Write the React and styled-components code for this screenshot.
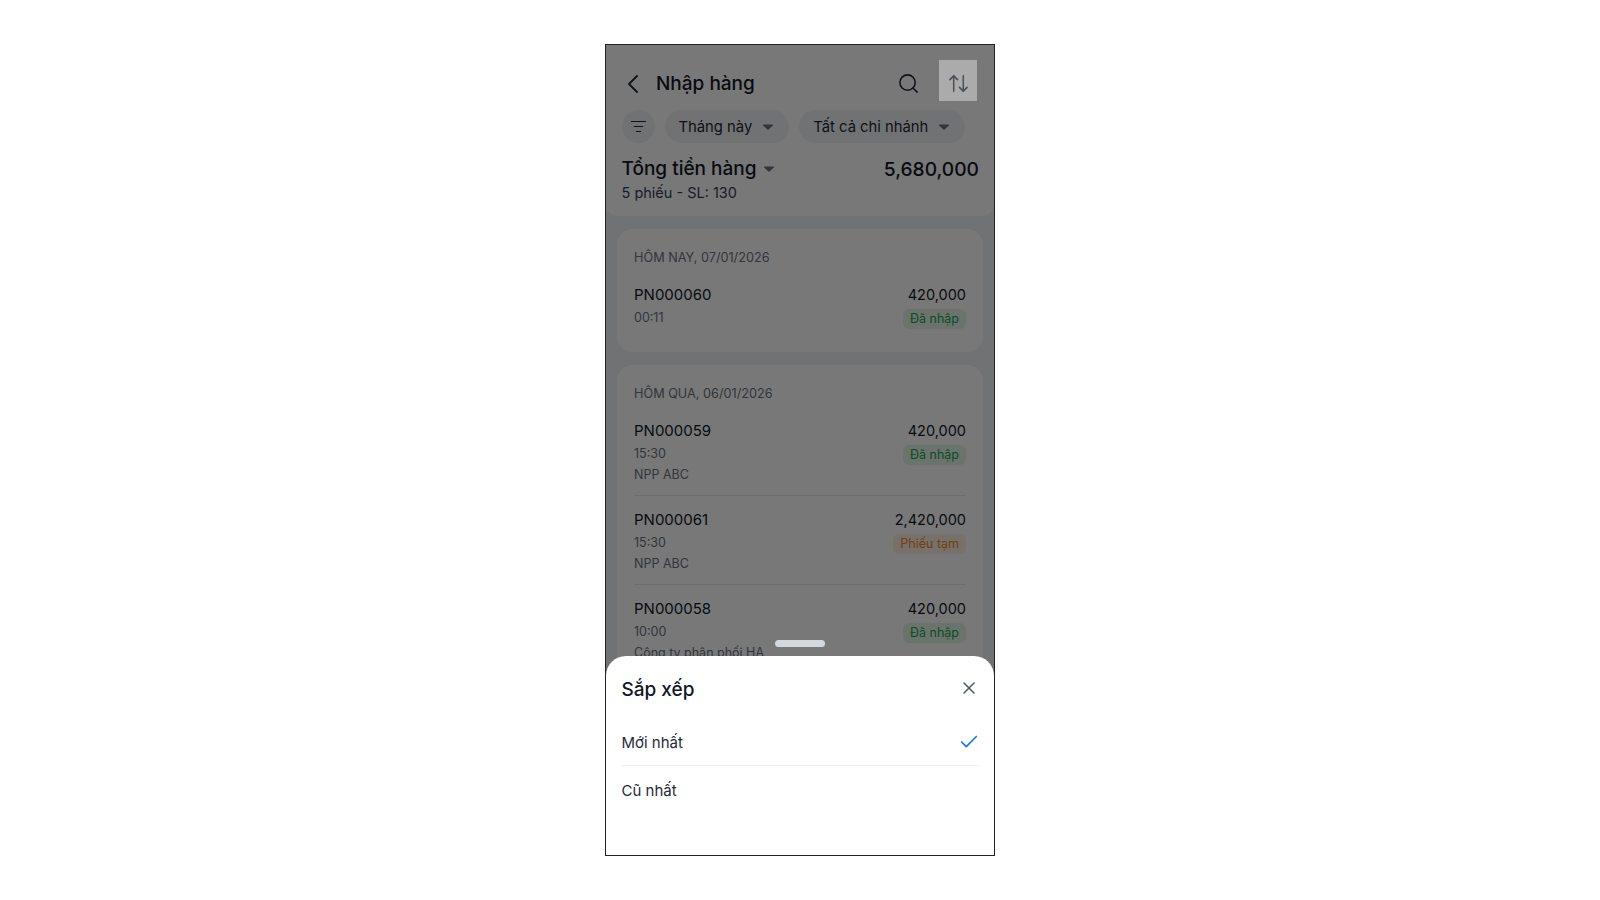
import React from "react";
import styled, { createGlobalStyle } from "styled-components";
import { ArrowUpDown, Check, ChevronLeft, ListFilter, Search, X } from "lucide-react";

const sections = [
  {
    label: "HÔM NAY, 07/01/2026",
    rows: [{ code: "PN000060", time: "00:11", amount: "420,000", status: "done" }],
  },
  {
    label: "HÔM QUA, 06/01/2026",
    rows: [
      { code: "PN000059", time: "15:30", vendor: "NPP ABC", amount: "420,000", status: "done" },
      { code: "PN000061", time: "15:30", vendor: "NPP ABC", amount: "2,420,000", status: "draft" },
      { code: "PN000058", time: "10:00", vendor: "Công ty phân phối HA", amount: "420,000", status: "done" },
    ],
  },
];

function Caret({ size = 12 }) {
  return (
    <CaretIcon width={size} height={size} viewBox="0 0 12 12">
      <path d="M1.6 3.6h8.8c.5 0 .8.6.5 1L6.5 8.6c-.3.3-.7.3-1 0L1.1 4.6c-.3-.4 0-1 .5-1z" fill="currentColor" />
    </CaretIcon>
  );
}

export default function App() {
  return (
    <>
      <GlobalStyle />
      <Page>
        <Phone>
          <Header>
            <TopBar>
              <BackButton>
                <ChevronLeft size={32} strokeWidth={1.4} />
              </BackButton>
              <Title>Nhập hàng</Title>
              <SearchButton>
                <Search size={23} strokeWidth={1.6} />
              </SearchButton>
              <SortButton>
                <ArrowUpDown size={23} strokeWidth={1.6} />
              </SortButton>
            </TopBar>
            <Filters>
              <FilterButton>
                <ListFilter size={17} strokeWidth={1.6} />
              </FilterButton>
              <Chip>
                Tháng này
                <Caret />
              </Chip>
              <Chip>
                Tất cả chi nhánh
                <Caret />
              </Chip>
            </Filters>
            <Summary>
              <SummaryLabel>
                Tổng tiền hàng
                <Caret />
              </SummaryLabel>
              <SummaryValue>5,680,000</SummaryValue>
            </Summary>
            <SummaryNote>5 phiếu - SL: 130</SummaryNote>
          </Header>

          <List>
            {sections.map((section) => (
              <Card key={section.label}>
                <DateLabel>{section.label}</DateLabel>
                {section.rows.map((row) => (
                  <Row key={row.code}>
                    <Left>
                      <Code>{row.code}</Code>
                      <Meta>{row.time}</Meta>
                      {row.vendor && <Meta>{row.vendor}</Meta>}
                    </Left>
                    <Right>
                      <Amount>{row.amount}</Amount>
                      <Badge $status={row.status}>{row.status === "done" ? "Đã nhập" : "Phiếu tạm"}</Badge>
                    </Right>
                  </Row>
                ))}
              </Card>
            ))}
          </List>

          <Overlay />

          <Sheet>
            <Handle />
            <SheetHeader>
              <SheetTitle>Sắp xếp</SheetTitle>
              <CloseButton>
                <X size={20} strokeWidth={1.8} />
              </CloseButton>
            </SheetHeader>
            <Option>
              Mới nhất
              <CheckMark>
                <Check size={22} strokeWidth={1.8} />
              </CheckMark>
            </Option>
            <Option>Cũ nhất</Option>
          </Sheet>
        </Phone>
      </Page>
    </>
  );
}

const GlobalStyle = createGlobalStyle`
  html, body {
    margin: 0;
    padding: 0;
    background: #fff;
  }
  body {
    font-family: Inter, "Noto Sans", sans-serif;
  }
`;

const Page = styled.div`
  align-items: center;
  display: flex;
  height: 900px;
  justify-content: center;
  width: 1600px;
`;

const Phone = styled.div`
  background: #f1f2f4;
  border: 1px solid #222;
  box-sizing: border-box;
  height: 812px;
  overflow: hidden;
  position: relative;
  width: 390px;
`;

const Header = styled.div`
  background: #fff;
  border-radius: 0 0 12px 12px;
  box-sizing: border-box;
  height: 171px;
  padding: 15px 15px 0 15.5px;
`;

const TopBar = styled.div`
  align-items: center;
  display: flex;
  height: 40px;
`;

const BackButton = styled.div`
  align-items: center;
  color: #1f2937;
  display: flex;
  justify-content: center;
  margin-left: -4.5px;
  margin-top: 8px;
  width: 32px;
`;

const Title = styled.div`
  color: #111827;
  flex: 1;
  font-size: 19px;
  font-weight: 500;
  margin-left: 7px;
  margin-top: 6px;
`;

const SearchButton = styled.div`
  align-items: center;
  color: #1f2937;
  display: flex;
  justify-content: center;
  margin-right: 19px;
  margin-top: 6px;
`;

const SortButton = styled.div`
  align-items: center;
  background: rgba(255, 255, 255, 0.38);
  box-sizing: border-box;
  color: #4a4f58;
  display: flex;
  height: 41px;
  justify-content: center;
  margin-right: 2px;
  padding-top: 6px;
  position: relative;
  width: 38px;
  z-index: 2;
`;

const Filters = styled.div`
  align-items: center;
  display: flex;
  gap: 10px;
  margin-top: 10px;
`;

const FilterButton = styled.div`
  align-items: center;
  background: #f1f2f4;
  border-radius: 50%;
  color: #1f2937;
  display: flex;
  height: 33px;
  justify-content: center;
  width: 33px;
`;

const Chip = styled.div`
  align-items: center;
  background: #f1f2f4;
  border-radius: 17px;
  color: #1f2937;
  display: flex;
  font-size: 14.8px;
  gap: 10px;
  height: 33px;
  padding: 0 15px 0 14px;
`;

const CaretIcon = styled.svg`
  color: #6b7280;
  flex-shrink: 0;
`;

const Summary = styled.div`
  align-items: center;
  display: flex;
  justify-content: space-between;
  margin-top: 12px;
`;

const SummaryLabel = styled.div`
  align-items: center;
  color: #111827;
  display: flex;
  font-size: 19px;
  font-weight: 500;
  gap: 6px;
  line-height: 28px;
`;

const SummaryValue = styled.div`
  color: #111827;
  font-size: 19.2px;
  font-weight: 500;
  line-height: 28px;
`;

const SummaryNote = styled.div`
  color: #374151;
  font-size: 14.5px;
  line-height: 20px;
`;

const List = styled.div`
  display: flex;
  flex-direction: column;
  gap: 13px;
  padding: 13px 11px 0;
`;

const Card = styled.div`
  background: #fff;
  border-radius: 16px;
  padding: 21px 17px 12px;
`;

const DateLabel = styled.div`
  color: #6b7280;
  font-size: 12.7px;
  line-height: 16px;
  margin-bottom: 5px;
`;

const Row = styled.div`
  display: flex;
  justify-content: space-between;
  padding: 14px 0 11px;
  & + & {
    border-top: 1px solid #e5e7eb;
  }
`;

const Left = styled.div`
  display: flex;
  flex-direction: column;
  gap: 3px;
`;

const Code = styled.div`
  color: #111827;
  font-size: 15px;
  line-height: 20px;
  margin-bottom: 1px;
`;

const Meta = styled.div`
  color: #6b7280;
  font-size: 12.5px;
  line-height: 18px;
`;

const Right = styled.div`
  align-items: flex-end;
  display: flex;
  flex-direction: column;
  gap: 4px;
`;

const Amount = styled.div`
  color: #111827;
  font-size: 14.5px;
  line-height: 20px;
`;

const Badge = styled.div`
  background: ${(props) => (props.$status === "done" ? "#e3f5e8" : "#fdf0e1")};
  border-radius: 6px;
  color: ${(props) => (props.$status === "done" ? "#16a34a" : "#ea8a1c")};
  font-size: 12.5px;
  line-height: 20px;
  padding: 0 7px;
`;

const Overlay = styled.div`
  background: rgba(0, 0, 0, 0.53);
  inset: 0;
  position: absolute;
`;

const Sheet = styled.div`
  background: #fff;
  border-radius: 20px 20px 0 0;
  bottom: 0;
  box-sizing: border-box;
  height: 199px;
  left: 0;
  padding: 0 15px 0 15.5px;
  position: absolute;
  right: 0;
  z-index: 3;
`;

const Handle = styled.div`
  background: #d5d9df;
  border-radius: 4px;
  height: 7px;
  left: 50%;
  margin-left: -25px;
  position: absolute;
  top: -16px;
  width: 50px;
`;

const SheetHeader = styled.div`
  align-items: center;
  display: flex;
  height: 46px;
  justify-content: space-between;
  padding: 10px 0 8px;
`;

const SheetTitle = styled.div`
  color: #111827;
  font-size: 19px;
  font-weight: 500;
`;

const CloseButton = styled.div`
  color: #4b5563;
  display: flex;
  margin-top: -2px;
`;

const Option = styled.div`
  align-items: center;
  color: #1f2937;
  display: flex;
  font-size: 15px;
  height: 45px;
  justify-content: space-between;
  & + & {
    border-top: 1px solid #eef0f2;
    height: 48px;
  }
`;

const CheckMark = styled.div`
  color: #1a73f0;
  display: flex;
  margin-right: -1px;
  margin-top: -2px;
`;
